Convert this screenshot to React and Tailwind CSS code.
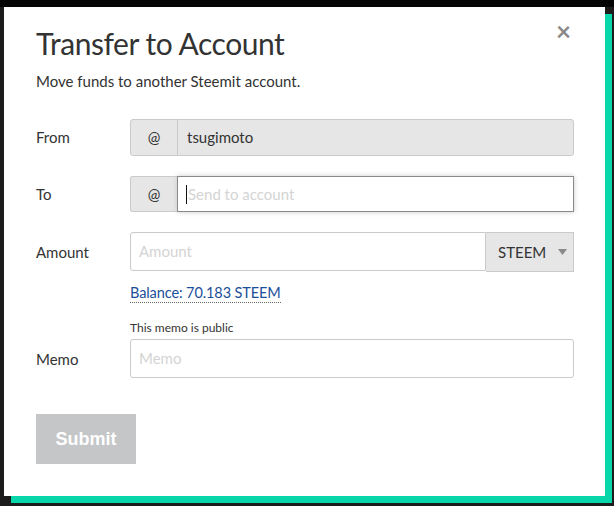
import React from "react";

export default function App() {
  return (
    <div className="w-[614px] h-[506px] bg-[#1c1c1c] relative overflow-hidden" style={{ fontFamily: "Lato, 'Noto Sans', sans-serif" }}>
      <div className="h-[7px] bg-[#050505]" />
      <div className="pl-[4px]">
        <div className="w-[601px] h-[489px] bg-white relative shadow-[7px_7px_0_0_#06d6a9] pt-[18px] pl-[32px] pr-[31px]">
          <button className="absolute right-[34px] top-[11px] text-[#8a8a8a] text-[26px] leading-none font-bold">×</button>
          <h1 className="text-[30px] leading-[36px] text-[#333] font-normal tracking-[-0.45px]">Transfer to Account</h1>
          <p className="mt-[10px] text-[15px] leading-[20px] text-[#333]">Move funds to another Steemit account.</p>

          <div className="mt-[28px] flex items-center">
            <div className="w-[94px] text-[15px] text-[#333]">From</div>
            <div className="flex flex-1 h-[37px] rounded-[3px] border border-[#cacaca] bg-[#e6e6e6] overflow-hidden">
              <div className="w-[47px] flex items-center justify-center border-r border-[#cacaca] text-[15px] text-[#333]">@</div>
              <div className="flex items-center pl-[9px] text-[15px] text-[#333]">tsugimoto</div>
            </div>
          </div>

          <div className="mt-[20px] flex items-center">
            <div className="w-[94px] text-[15px] text-[#333]">To</div>
            <div className="flex flex-1 h-[36px]">
              <div className="w-[47px] flex items-center justify-center rounded-l-[3px] border border-r-0 border-[#cacaca] bg-[#e6e6e6] text-[15px] text-[#333]">@</div>
              <div className="flex-1 flex items-center border border-[#8a8a8a] bg-white pl-[8px] text-[15px] text-[#d4d4d4] shadow-[0_0_5px_#cacaca]">
                <span className="w-px h-[19px] bg-[#111] mr-[1px]" />
                <span>Send to account</span>
              </div>
            </div>
          </div>

          <div className="mt-[20px] flex items-start">
            <div className="w-[94px] pt-[9px] text-[15px] text-[#333]">Amount</div>
            <div className="flex-1">
              <div className="flex h-[39px]">
                <div className="flex-1 flex items-center rounded-l-[3px] border border-[#cacaca] bg-white pl-[8px] text-[15px] text-[#d4d4d4]">Amount</div>
                <div className="w-[88px] h-[40px] flex items-center bg-[#e6e6e6] border border-l-0 border-[#cacaca] pl-[12px] text-[15px] text-[#333]">
                  <span>STEEM</span>
                  <svg className="ml-[12px]" width="9" height="6" viewBox="0 0 9 6"><path d="M0 0h9L4.5 6z" fill="#8a8a8a" /></svg>
                </div>
              </div>
              <div className="mt-[9px]">
                <span className="text-[14.5px] tracking-[-0.1px] text-[#1a5099] border-b border-dotted border-[#666] pb-[1px]">Balance: 70.183 STEEM</span>
              </div>
            </div>
          </div>

          <div className="mt-[16px] flex items-end">
            <div className="w-[94px] pb-[8px] text-[15px] text-[#333]">Memo</div>
            <div className="flex-1">
              <div className="text-[12px] leading-[16px] text-[#333] mb-[3px]">This memo is public</div>
              <div className="h-[39px] flex items-center rounded-[3px] border border-[#cacaca] bg-white pl-[8px] text-[15px] text-[#d4d4d4]">Memo</div>
            </div>
          </div>

          <button className="mt-[36px] w-[100px] h-[50px] bg-[#c5c6c8] text-white font-bold text-[18px]" style={{ fontFamily: "'Liberation Sans', Arial, sans-serif" }}>Submit</button>
        </div>
      </div>
    </div>
  );
}
